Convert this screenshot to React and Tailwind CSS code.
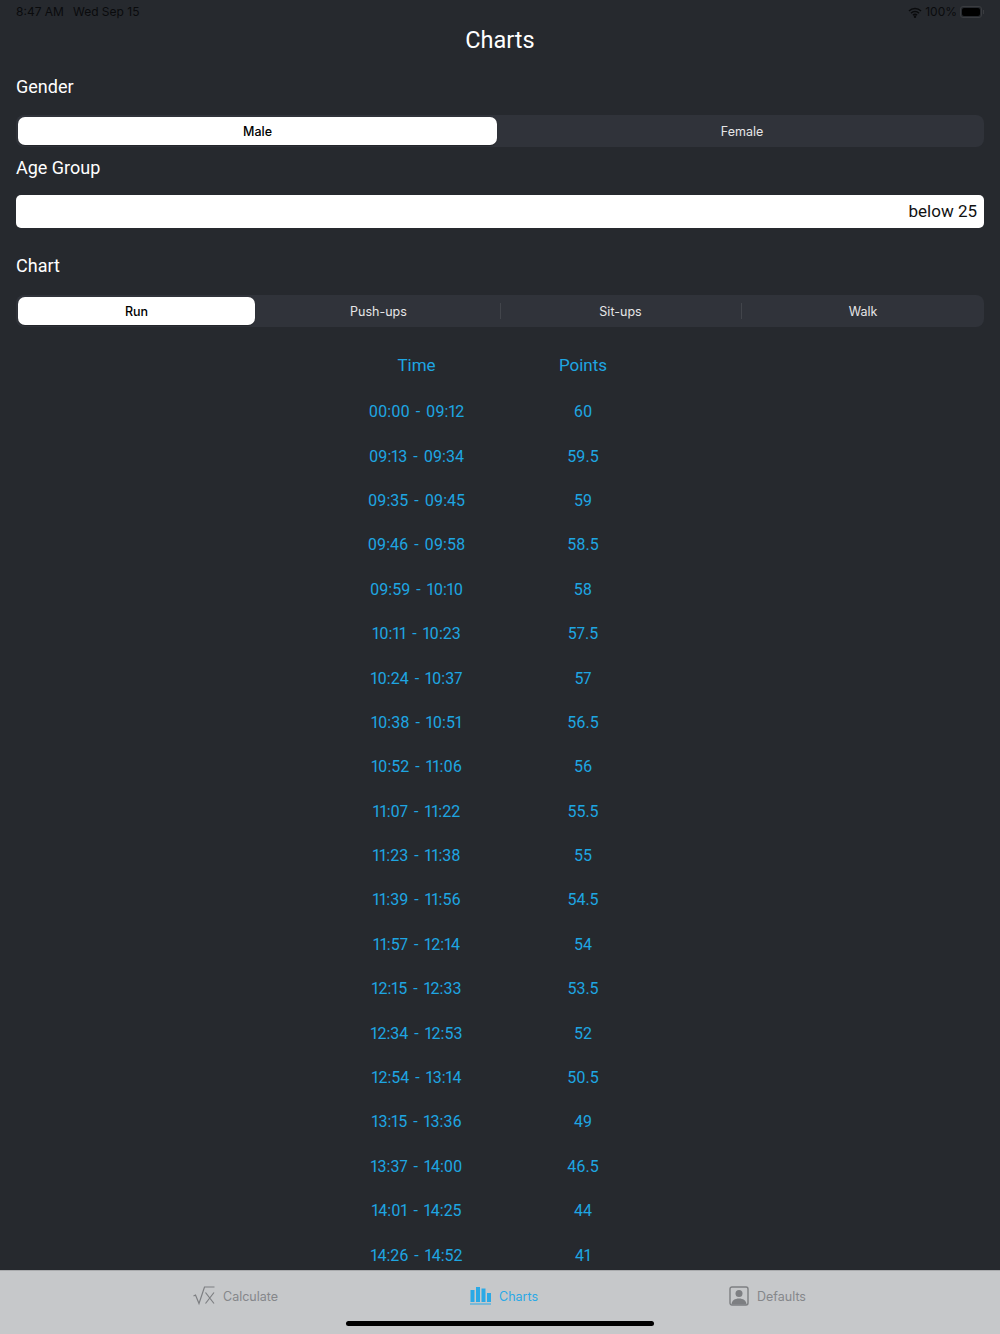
const rows = [
  ["00:00 - 09:12","60"],["09:13 - 09:34","59.5"],["09:35 - 09:45","59"],["09:46 - 09:58","58.5"],["09:59 - 10:10","58"],
  ["10:11 - 10:23","57.5"],["10:24 - 10:37","57"],["10:38 - 10:51","56.5"],["10:52 - 11:06","56"],["11:07 - 11:22","55.5"],
  ["11:23 - 11:38","55"],["11:39 - 11:56","54.5"],["11:57 - 12:14","54"],["12:15 - 12:33","53.5"],["12:34 - 12:53","52"],
  ["12:54 - 13:14","50.5"],["13:15 - 13:36","49"],["13:37 - 14:00","46.5"],["14:01 - 14:25","44"],["14:26 - 14:52","41"],
];
const title = "font-['Roboto',sans-serif]";
const sys = "font-['Inter',sans-serif]";

function Seg({ items, cols }) {
  return (
    <div className={`grid h-8 rounded-lg bg-[#30333a] p-0.5 ${cols}`}>
      {items.map(([t, pad], i) => (
        <div key={t} className={`relative flex items-center justify-center ${pad}`}>
          {i > 1 && <div className="absolute left-0 top-1.5 bottom-1.5 w-px bg-[#42454b]" />}
          <div className={`flex h-full w-full items-center justify-center rounded-[7px] pt-0.5 text-[12.5px] ${sys} ${i === 0 ? "bg-white font-medium text-black shadow-[0_1px_1px_rgba(0,0,0,0.3)]" : "text-[#e6e6e7]"}`}>{t}</div>
        </div>
      ))}
    </div>
  );
}

function Label({ children, className }) {
  return <div className={`${title} text-[18px] leading-6 text-white ${className}`}>{children}</div>;
}

export default function App() {
  return (
    <div className="relative flex h-[1334px] w-[1000px] flex-col overflow-hidden bg-[#26292e]">
      <div className={`flex h-6 shrink-0 items-center justify-between px-4 text-[12px] text-[#0a0b0d] ${sys}`}>
        <div className="flex gap-[9px]"><span>8:47 AM</span><span>Wed Sep 15</span></div>
        <div className="flex items-center gap-[3px]">
          <svg width="14" height="11" viewBox="0 0 14 11"><path d="M1 4a8.6 8.6 0 0 1 12 0M3 6.2a5.6 5.6 0 0 1 8 0M5 8.2a2.8 2.8 0 0 1 4 0" fill="none" stroke="#0a0b0d" strokeWidth="1.6"/><circle cx="7" cy="9.7" r="1.2" fill="#0a0b0d"/></svg>
          <span>100%</span>
          <div className="flex items-center">
            <div className="flex h-3 w-[22px] items-center rounded-[3px] border border-[#3a3c40] p-px"><div className="h-full w-full rounded-[2px] bg-black" /></div>
            <div className="ml-px h-1 w-px bg-[#3a3c40]" />
          </div>
        </div>
      </div>
      <div className={`${title} mt-0.5 text-center text-[23.5px] leading-7 text-white`}>Charts</div>
      <div className="flex flex-col px-4">
        <Label className="mt-[21px]">Gender</Label>
        <div className="mt-4"><Seg cols="grid-cols-2" items={[["Male", "pr-[3px]"], ["Female", "pl-[2px]"]]} /></div>
        <Label className="mt-[9px]">Age Group</Label>
        <div className={`mt-[15px] flex h-[33px] items-center justify-end rounded-[5px] bg-white px-[7px] text-[17px] text-[#111] ${title}`}>below 25</div>
        <Label className="mt-[26px]">Chart</Label>
        <div className="mt-[17px]"><Seg cols="grid-cols-4" items={[["Run", "pr-1"], ["Push-ups", "pr-[2px]"], ["Sit-ups", ""], ["Walk", "pl-[3px]"]]} /></div>
      </div>
      <div className={`${title} mt-4 flex min-h-0 flex-1 flex-col items-center overflow-hidden text-[#1ea6e2] proportional-nums`}>
        <div className="flex h-[47px] w-[340px] shrink-0 items-center pb-0.5 text-[17px]">
          <div className="w-[173px] text-center">Time</div>
          <div className="w-[160px] text-center">Points</div>
        </div>
        {rows.map(([a, b]) => (
          <div key={a} className="flex h-[44.4px] w-[340px] shrink-0 items-center text-[16px] [word-spacing:2px]">
            <div className="w-[173px] text-center">{a}</div>
            <div className="w-[160px] text-center">{b}</div>
          </div>
        ))}
      </div>
      <div className={`flex h-16 shrink-0 items-start gap-[191px] border-t border-[#a9abad] bg-[#c6c8ca] pl-[193px] pt-[15px] text-[12.5px] text-[#85878a] ${sys}`}>
        <div className="flex items-center gap-2">
          <svg width="22" height="20" viewBox="0 0 22 20" fill="none" stroke="#7d7f82" strokeWidth="1.2"><path d="M0.5 10l2 -1l3.5 8.5l5.5 -16.5h10"/><path d="M12.5 6.5l8.5 11M21 6.5l-8.5 11"/></svg>
          <span className="pt-0.5">Calculate</span>
        </div>
        <div className="ml-px flex items-center gap-2 text-[#2aa9e6]">
          <svg width="21" height="20" viewBox="0 0 21 20" fill="#2aa9e6"><rect x="0.5" y="4" width="4" height="12"/><rect x="6" y="1" width="4" height="15"/><rect x="11.5" y="2.5" width="4" height="13.5"/><rect x="17" y="7" width="4" height="9"/><rect x="0" y="17.5" width="21" height="1"/></svg>
          <span className="pt-0.5">Charts</span>
        </div>
        <div className="flex items-center gap-2">
          <svg width="20" height="20" viewBox="0 0 20 20"><rect x="1" y="1" width="18" height="18" rx="2" fill="none" stroke="#7d7f82" strokeWidth="1.4"/><circle cx="10" cy="7.5" r="3.5" fill="#7d7f82"/><path d="M2.5 18.5c0-4 3.5-6 7.5-6s7.5 2 7.5 6z" fill="#7d7f82"/></svg>
          <span className="pt-0.5">Defaults</span>
        </div>
      </div>
      <div className="absolute bottom-2 left-[346px] h-[5px] w-[308px] rounded-full bg-black" />
    </div>
  );
}
